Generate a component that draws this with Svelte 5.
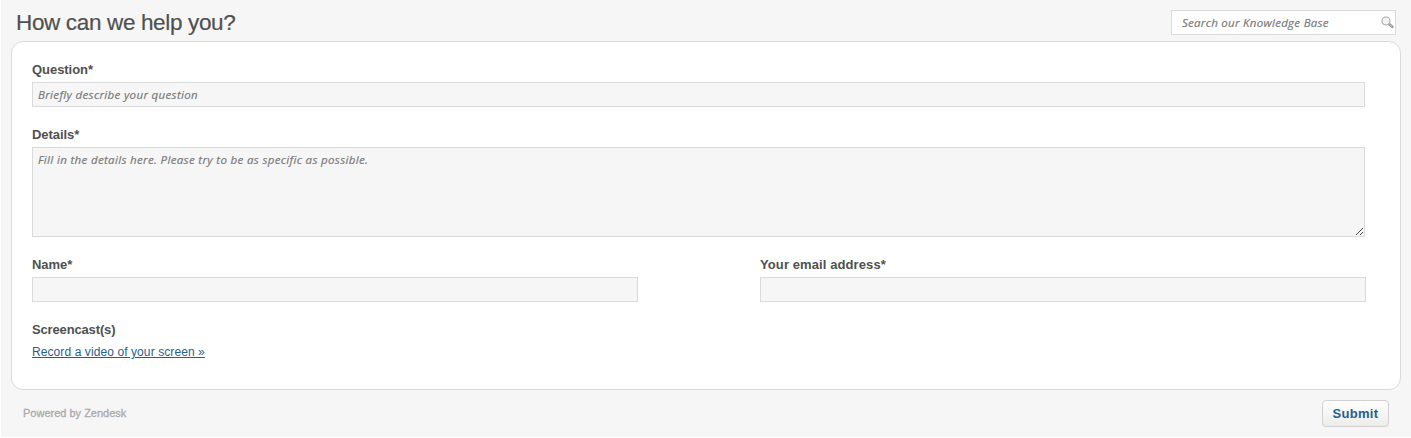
<script>
  let question = $state('');
  let details = $state('');
  let name = $state('');
  let email = $state('');
  let query = $state('');
</script>

<main class="page">
  <header>
    <h1>How can we help you?</h1>
    <div class="search">
      <input aria-label="Search" placeholder="Search our Knowledge Base" bind:value={query} />
      <svg width="13" height="13" viewBox="0 0 13 13">
        <path d="M8.3 8.3 L11.2 10.8" stroke="#999" stroke-width="2.8" stroke-linecap="round" />
        <path d="M9 8.8 L11 10.5" stroke="#ccc" stroke-width="1" stroke-linecap="round" />
        <circle cx="5" cy="5" r="4" fill="#f3f3f3" stroke="#aaa" stroke-width="1.1" />
      </svg>
    </div>
  </header>

  <form class="card" onsubmit={(e) => e.preventDefault()}>
    <div class="field">
      <label for="question">Question*</label>
      <input id="question" placeholder="Briefly describe your question" bind:value={question} />
    </div>
    <div class="field">
      <label for="details">Details*</label>
      <div class="area">
        <textarea id="details" placeholder="Fill in the details here. Please try to be as specific as possible." bind:value={details}></textarea>
        <svg class="grip" width="8" height="8" viewBox="0 0 8 8" shape-rendering="crispEdges">
          {#each [0, 1, 2, 3, 4, 5, 6] as i}
            <rect x={i} y={6 - i} width="1" height="1" fill="#444" />
          {/each}
          {#each [0, 1, 2] as i}
            <rect x={4 + i} y={6 - i} width="1" height="1" fill="#444" />
          {/each}
        </svg>
      </div>
    </div>
    <div class="row">
      <div class="field">
        <label for="name">Name*</label>
        <input id="name" bind:value={name} />
      </div>
      <div class="field">
        <label class="wide" for="email">Your email address*</label>
        <input id="email" bind:value={email} />
      </div>
    </div>
    <div class="cast">
      <h2>Screencast(s)</h2>
      <a href="#record">Record a video of your screen »</a>
    </div>
  </form>

  <footer>
    <span class="powered">Powered by Zendesk</span>
    <button type="button">Submit</button>
  </footer>
</main>

<style>
  :global(body) {
    margin: 0;
    background: #fff;
  }
  .page {
    box-sizing: border-box;
    height: 437px;
    margin-left: 1px;
    padding: 0 10px;
    background: #f6f6f6;
    color: #505050;
    font-family: "Liberation Sans", Arial, sans-serif;
  }
  header {
    display: flex;
    justify-content: space-between;
    align-items: flex-start;
    height: 41px;
    padding: 0 5px;
    box-sizing: border-box;
  }
  h1 {
    margin: 10px 0 0;
    font-size: 22.5px;
    line-height: 26px;
    font-weight: 400;
    letter-spacing: -0.35px;
    -webkit-text-stroke: 0.2px;
  }
  input,
  textarea {
    display: block;
    box-sizing: border-box;
    width: 100%;
    height: 25px;
    margin: 0;
    padding: 0 5px;
    border: 1px solid #dadada;
    border-radius: 0;
    outline: 0;
    background: #f6f6f6;
    color: #444;
    font: italic 11.5px/15px "Open Sans", "Noto Sans", sans-serif;
    letter-spacing: 0.34px;
  }
  input::placeholder,
  textarea::placeholder {
    color: #7a7a7a;
    opacity: 1;
    -webkit-text-stroke: 0.2px;
  }
  .search {
    display: flex;
    align-items: center;
    box-sizing: border-box;
    width: 225px;
    height: 25px;
    margin-top: 10px;
    padding-right: 1px;
    border: 1px solid #dadada;
    background: #fff;
  }
  .search input {
    flex: 1;
    width: 0;
    height: 23px;
    padding: 0 0 0 10px;
    border: 0;
    background: transparent;
    letter-spacing: 0.28px;
  }
  .card {
    display: flex;
    flex-direction: column;
    gap: 19px;
    box-sizing: border-box;
    height: 349px;
    padding: 19px 34px 0 20px;
    border: 1px solid #dadada;
    border-radius: 12px;
    background: #fff;
  }
  .field {
    width: 1333px;
  }
  label,
  h2 {
    display: block;
    height: 21px;
    margin: 0;
    font-size: 13px;
    line-height: 17px;
    font-weight: 700;
    letter-spacing: -0.05px;
  }
  .wide {
    letter-spacing: 0.1px;
  }
  h2 {
    letter-spacing: -0.15px;
  }
  .area {
    position: relative;
  }
  textarea {
    height: 90px;
    padding: 4px 5px;
    resize: none;
  }
  .grip {
    position: absolute;
    right: 1px;
    bottom: 1px;
  }
  .row {
    display: flex;
    justify-content: space-between;
    width: 1334px;
  }
  .row .field {
    width: 606px;
  }
  a {
    display: inline-block;
    font-size: 12px;
    line-height: 18px;
    letter-spacing: 0.09px;
    color: #1f5f93;
  }
  footer {
    display: flex;
    justify-content: space-between;
    align-items: center;
    height: 47px;
    padding: 0 12px;
  }
  .powered {
    padding-bottom: 2px;
    font-size: 11px;
    color: #aaa;
    -webkit-text-stroke: 0.3px;
  }
  button {
    box-sizing: border-box;
    width: 67px;
    height: 27px;
    padding: 0;
    border: 1px solid #d0d0d0;
    border-radius: 4px;
    background: linear-gradient(#fff, #ecece8);
    color: #1f5f93;
    font: 700 13px "Liberation Sans", Arial, sans-serif;
    letter-spacing: 0.3px;
  }
</style>
